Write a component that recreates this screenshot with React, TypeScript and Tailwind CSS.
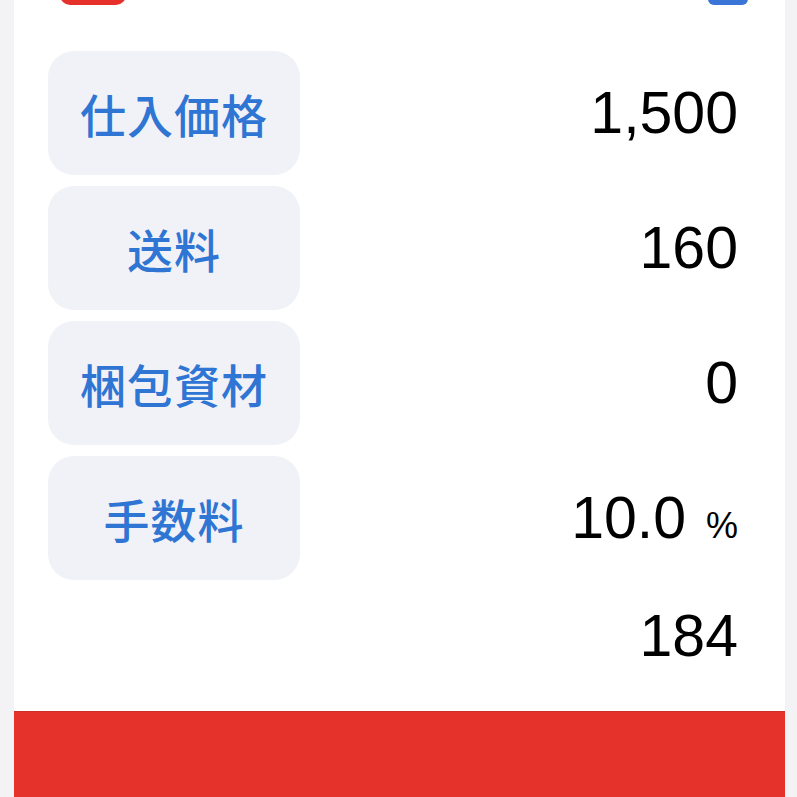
import React from "react";

const rows = [
  { label: "仕入価格", value: "1,500" },
  { label: "送料", value: "160" },
  { label: "梱包資材", value: "0" },
  { label: "手数料", value: "10.0", unit: "%" },
];

export default function App() {
  return (
    <div
      className="w-[797px] h-[797px] overflow-hidden bg-[#f3f3f5] flex"
      style={{ fontFamily: '"Liberation Sans", "Noto Sans CJK JP", sans-serif' }}
    >
      <div className="ml-[14px] w-[771px] h-full bg-white flex flex-col">
        <div className="h-[5px] overflow-hidden flex items-end pl-[46px] pr-[37px] justify-between">
          <div className="w-[66px] h-[20px] rounded-[14px] bg-[#e5312a]" />
          <div className="w-[40px] h-[14px] rounded-[6px] bg-[#3a74d6]" />
        </div>
        <div className="flex flex-col gap-[11px] pt-[46px] pl-[34px] pr-[47px]">
          {rows.map((r) => (
            <div key={r.label} className="flex items-center justify-between h-[124px]">
              <div className="w-[252px] h-full rounded-[26px] bg-[#f1f2f7] flex items-center justify-center">
                <span
                  className="text-[46px] leading-none text-[#2f75d3] font-medium tracking-[1px]"
                  style={{ fontFamily: '"Noto Sans CJK JP", sans-serif' }}
                >
                  {r.label}
                </span>
              </div>
              <div className="flex items-baseline text-black">
                <span className="text-[59px] leading-none">{r.value}</span>
                {r.unit && <span className="text-[36px] leading-none ml-[20px]">{r.unit}</span>}
              </div>
            </div>
          ))}
          <div className="flex items-center justify-end h-[90px]">
            <span className="text-[59px] leading-none text-black">184</span>
          </div>
        </div>
        <div className="mt-[30px] flex-1 bg-[#e5322a] border-t border-[#c93028]" />
      </div>
    </div>
  );
}
